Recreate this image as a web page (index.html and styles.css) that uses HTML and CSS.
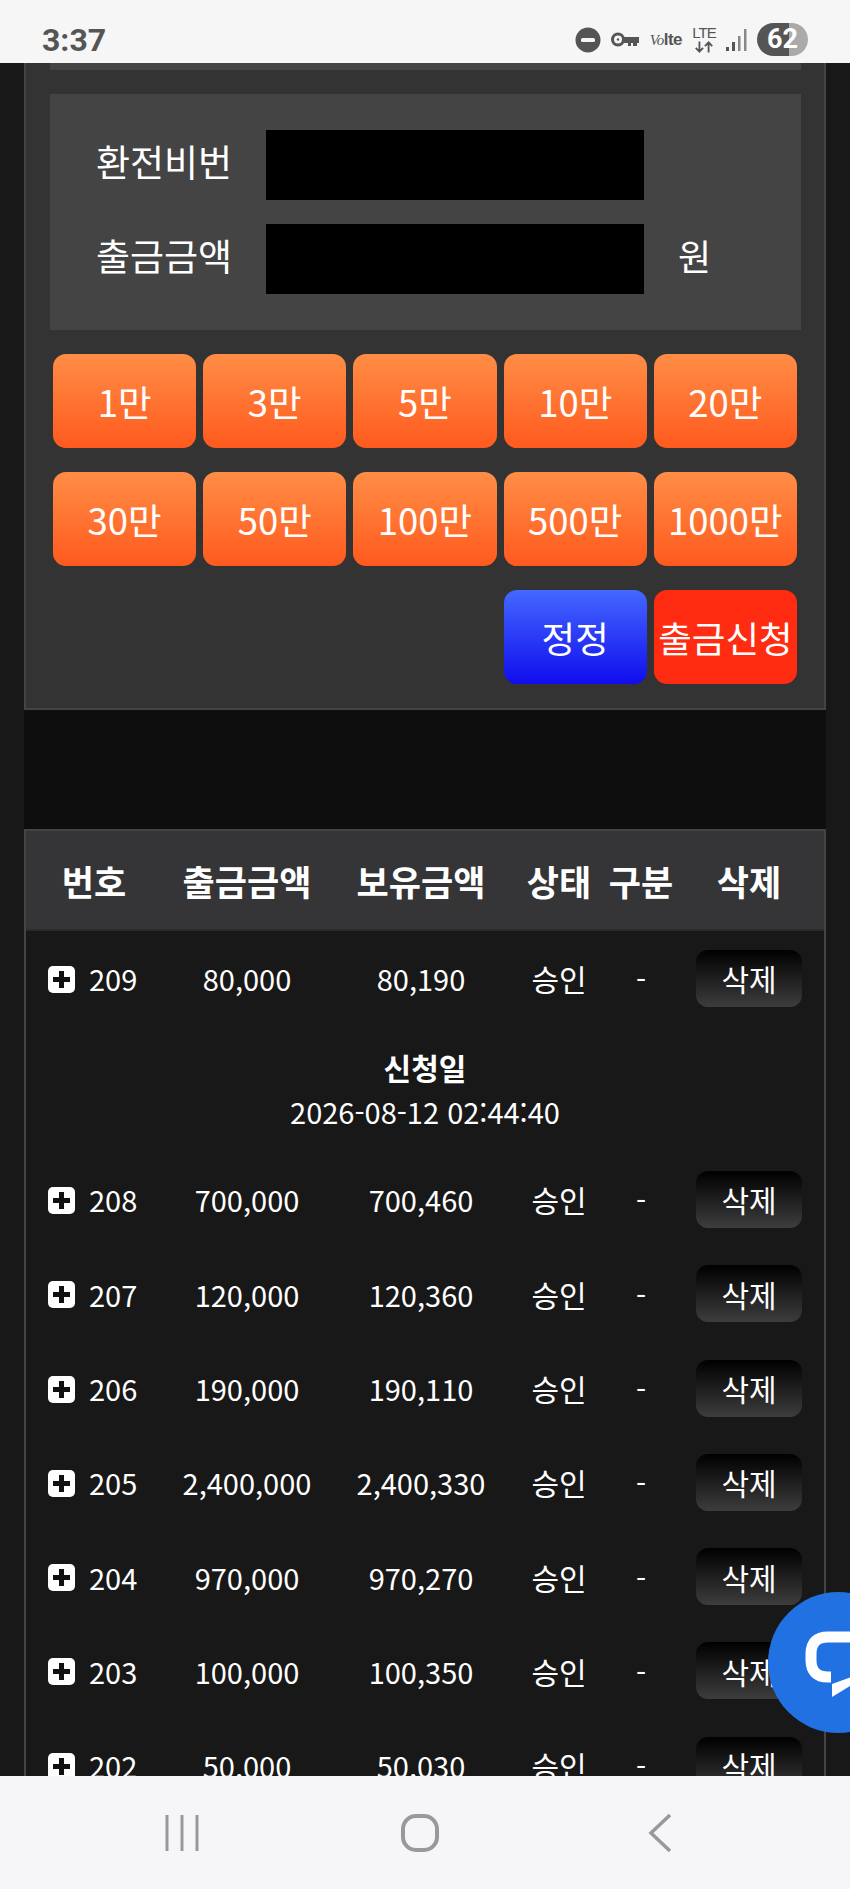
FILE: index.html
```html
<!DOCTYPE html>
<html lang="ko">
<head>
	<meta charset="utf-8">
	<meta name="viewport" content="width=850">
	<title>출금신청</title>
	<link rel="stylesheet" href="styles.css">
</head>
<body>

<div class="statusbar">
	<span class="clock">3:37</span>
	<div class="status-icons">
		<svg class="ic-dnd" viewBox="0 0 26 26"><circle cx="13" cy="13" r="12.5" fill="#555"/><rect x="6" y="11" width="14" height="4" rx="1.5" fill="#f6f6f6"/></svg>
		<svg class="ic-key" viewBox="0 0 28 15"><circle cx="7" cy="7.5" r="5.5" fill="none" stroke="#555" stroke-width="3"/><circle cx="7" cy="7.5" r="1.2" fill="#555"/><path d="M13 5h15v6h-2v3h-4v-3h-2v3h-3v-3h-4z" fill="#555"/></svg>
		<span class="volte"><i>Vo</i>lte</span>
		<div class="lte">
			<span>LTE</span>
			<svg viewBox="0 0 24 12"><path d="M7 0v11M3 7l4 4 4-4M17 12V1M13 5l4-4 4 4" fill="none" stroke="#555" stroke-width="2"/></svg>
		</div>
		<svg class="ic-signal" viewBox="0 0 21 22"><rect x="0" y="18" width="3" height="4" fill="#555"/><rect x="6" y="13" width="3" height="9" fill="#555"/><rect x="12" y="7" width="2.5" height="15" fill="#888"/><rect x="18" y="0" width="2.5" height="22" fill="#888"/></svg>
		<span class="battery">62</span>
	</div>
</div>

<div class="content">
	<div class="panel">
		<div class="stub"></div>
		<div class="form-box">
			<label class="form-label">환전비번</label>
			<div class="masked"></div>
			<span></span>
			<label class="form-label">출금금액</label>
			<div class="masked"></div>
			<span class="unit">원</span>
		</div>
		<div class="amounts">
			<button class="btn">1만</button>
			<button class="btn">3만</button>
			<button class="btn">5만</button>
			<button class="btn">10만</button>
			<button class="btn">20만</button>
			<button class="btn">30만</button>
			<button class="btn">50만</button>
			<button class="btn">100만</button>
			<button class="btn">500만</button>
			<button class="btn">1000만</button>
			<button class="btn btn-blue btn-fourth">정정</button>
			<button class="btn btn-red">출금신청</button>
		</div>
	</div>

	<div class="band"></div>

	<div class="list">
		<table>
			<colgroup>
				<col class="c-no"><col class="c-out"><col class="c-have"><col class="c-state"><col class="c-kind"><col class="c-del">
			</colgroup>
			<thead>
				<tr><th>번호</th><th>출금금액</th><th>보유금액</th><th>상태</th><th>구분</th><th>삭제</th></tr>
			</thead>
			<tbody>
				<tr>
					<td><div class="no"><span class="plus"></span>209</div></td>
					<td>80,000</td><td>80,190</td><td class="state">승인</td><td>-</td>
					<td><button class="del">삭제</button></td>
				</tr>
				<tr class="detail">
					<td colspan="6"><b>신청일</b><br>2026-08-12 02:44:40</td>
				</tr>
				<tr>
					<td><div class="no"><span class="plus"></span>208</div></td>
					<td>700,000</td><td>700,460</td><td class="state">승인</td><td>-</td>
					<td><button class="del">삭제</button></td>
				</tr>
				<tr>
					<td><div class="no"><span class="plus"></span>207</div></td>
					<td>120,000</td><td>120,360</td><td class="state">승인</td><td>-</td>
					<td><button class="del">삭제</button></td>
				</tr>
				<tr>
					<td><div class="no"><span class="plus"></span>206</div></td>
					<td>190,000</td><td>190,110</td><td class="state">승인</td><td>-</td>
					<td><button class="del">삭제</button></td>
				</tr>
				<tr>
					<td><div class="no"><span class="plus"></span>205</div></td>
					<td>2,400,000</td><td>2,400,330</td><td class="state">승인</td><td>-</td>
					<td><button class="del">삭제</button></td>
				</tr>
				<tr>
					<td><div class="no"><span class="plus"></span>204</div></td>
					<td>970,000</td><td>970,270</td><td class="state">승인</td><td>-</td>
					<td><button class="del">삭제</button></td>
				</tr>
				<tr>
					<td><div class="no"><span class="plus"></span>203</div></td>
					<td>100,000</td><td>100,350</td><td class="state">승인</td><td>-</td>
					<td><button class="del">삭제</button></td>
				</tr>
				<tr>
					<td><div class="no"><span class="plus"></span>202</div></td>
					<td>50,000</td><td>50,030</td><td class="state">승인</td><td>-</td>
					<td><button class="del">삭제</button></td>
				</tr>
			</tbody>
		</table>
	</div>

	<div class="chat">
		<svg viewBox="0 0 141 141"><path d="M124 45H60q-17 0-17 17v6q0 17 17 17h3" fill="none" stroke="#fff" stroke-width="11"/><path d="M64 92v13l30-18.500V81z" fill="#fff"/></svg>
	</div>
</div>

<div class="navbar">
	<svg class="nav-recent" viewBox="0 0 34 36"><path d="M2 0v36M17 0v36M32 0v36" fill="none" stroke="#999" stroke-width="3"/></svg>
	<svg class="nav-home" viewBox="0 0 38 38"><rect x="2" y="2" width="34" height="34" rx="13" fill="none" stroke="#999" stroke-width="4"/></svg>
	<svg class="nav-back" viewBox="0 0 24 38"><path d="M22 1L3 19l19 18" fill="none" stroke="#999" stroke-width="3.5"/></svg>
</div>

</body>
</html>
```

FILE: styles.css
```css
html, body {
	height: 100%;
}
body {
	margin: 0;
	height: 1889px;
	display: flex;
	flex-direction: column;
	overflow: hidden;
	background: #181818;
	color: #fff;
	font-family: "Noto Sans CJK KR", "Noto Sans", sans-serif;
	font-size: 29px;
}
button {
	font-family: inherit;
	color: #fff;
	border: 0;
	padding: 0;
}

/* --------------- status bar */

.statusbar {
	flex: none;
	height: 63px;
	box-sizing: border-box;
	padding: 16px 42px 0;
	background: #f6f6f6;
	display: flex;
	align-items: center;
	justify-content: space-between;
	color: #555;
}
.clock {
	font-family: Roboto, sans-serif;
	font-weight: 700;
	font-size: 32px;
}
.status-icons {
	display: flex;
	align-items: center;
	gap: 10px;
}
.ic-dnd { width: 26px; height: 26px; }
.ic-key { width: 28px; height: 15px; }
.volte {
	width: 33px;
	text-align: right;
	font-family: "Liberation Sans", sans-serif;
	font-size: 17px;
	font-weight: 700;
	letter-spacing: -0.5px;
	white-space: nowrap;
}
.volte i {
	font-family: "Liberation Serif", serif;
	font-size: 15px;
	font-weight: 400;
}
.lte {
	display: flex;
	flex-direction: column;
	align-items: center;
	width: 24px;
	font-family: "Liberation Sans", sans-serif;
	font-size: 15px;
	letter-spacing: -1px;
	line-height: 14px;
}
.lte svg { width: 22px; height: 12px; margin-top: 1px; }
.ic-signal { width: 21px; height: 22px; }
.battery {
	width: 51px;
	height: 33px;
	border-radius: 17px;
	background: linear-gradient(to right, #555 62%, #aaa 62%);
	color: #fff;
	font-family: Roboto, sans-serif;
	font-weight: 700;
	font-size: 27px;
	line-height: 33px;
	text-align: center;
}

/* --------------- page */

.content {
	flex: 1;
	position: relative;
	overflow: hidden;
}
.panel {
	margin: 0 24px;
	padding-bottom: 24px;
	background: #333;
	border: 2px solid #444;
	border-top: 0;
}
.stub {
	height: 7px;
	margin: 0 23px 0 24px;
	background: #444;
}
.form-box {
	margin: 24px 23px 0 24px;
	padding: 36px 0 36px 46px;
	background: #444;
	display: grid;
	grid-template-columns: 170px 378px auto;
	row-gap: 24px;
	align-items: center;
}
.form-label {
	padding-bottom: 8px;
	font-size: 37px;
	line-height: 62px;
}
.masked {
	height: 70px;
	background: #000;
}
.unit {
	margin-left: 34px;
	padding-bottom: 8px;
	font-size: 36px;
}
.amounts {
	margin: 24px 27px 0;
	display: grid;
	grid-template-columns: repeat(5, 1fr);
	gap: 24px 7px;
}
.btn {
	height: 94px;
	border-radius: 13px;
	font-size: 36.5px;
	background: linear-gradient(#ff8d46, #ff5a1e);
	white-space: nowrap;
}
.btn-fourth {
	grid-column-start: 4;
}
.btn-blue {
	background: linear-gradient(#4468ff, #100ded);
}
.btn-red {
	background: #ff2c12;
}
.band {
	height: 119px;
	margin: 0 24px;
	background: #0e0e0e;
}

/* --------------- list */

.list {
	margin: 0 24px;
	border: 2px solid #444;
	border-bottom: 0;
	background: #181818;
}
table {
	width: 798px;
	table-layout: fixed;
	border-collapse: collapse;
}
.c-no { width: 136px; }
.c-out { width: 170px; }
.c-have { width: 178px; }
.c-state { width: 98px; }
.c-kind { width: 66px; }
.c-del { width: 150px; }

th {
	height: 98px;
	padding: 0;
	font-size: 35px;
	font-weight: 700;
	background: #353537;
	border-bottom: 2px solid #2a2a2a;
}
td {
	height: 94.3px;
	padding: 0;
	text-align: center;
}
td.state {
	font-size: 30px;
}
.no {
	display: flex;
	align-items: center;
	gap: 14px;
	padding-left: 22px;
}
.plus {
	position: relative;
	width: 27px;
	height: 27px;
	margin-top: 2px;
	border-radius: 5px;
	background: #fff;
}
.plus:before, .plus:after {
	content: "";
	position: absolute;
	background: #111;
}
.plus:before { left: 5px; right: 5px; top: 11px; height: 5px; }
.plus:after { top: 5px; bottom: 5px; left: 11px; width: 5px; }

.del {
	width: 106px;
	height: 57px;
	margin-left: 22px;
	display: block;
	border-radius: 12px;
	font-size: 30px;
	background: linear-gradient(#000, #3d3d3d);
}
.detail td {
	height: 127px;
	line-height: 44px;
}
.detail b {
	font-size: 30px;
}

/* --------------- overlays */

.chat {
	position: absolute;
	left: 768px;
	top: 1529px;
	width: 141px;
	height: 141px;
	border-radius: 50%;
	background: #2271e3;
}
.chat svg {
	display: block;
	width: 141px;
	height: 141px;
}

.navbar {
	flex: none;
	height: 113px;
	padding-right: 14px;
	background: #f6f6f8;
	display: flex;
	align-items: center;
	justify-content: center;
}
.nav-recent { width: 34px; height: 36px; margin-right: 202px; }
.nav-home { width: 38px; height: 38px; margin-right: 209px; }
.nav-back { width: 24px; height: 38px; }
```
